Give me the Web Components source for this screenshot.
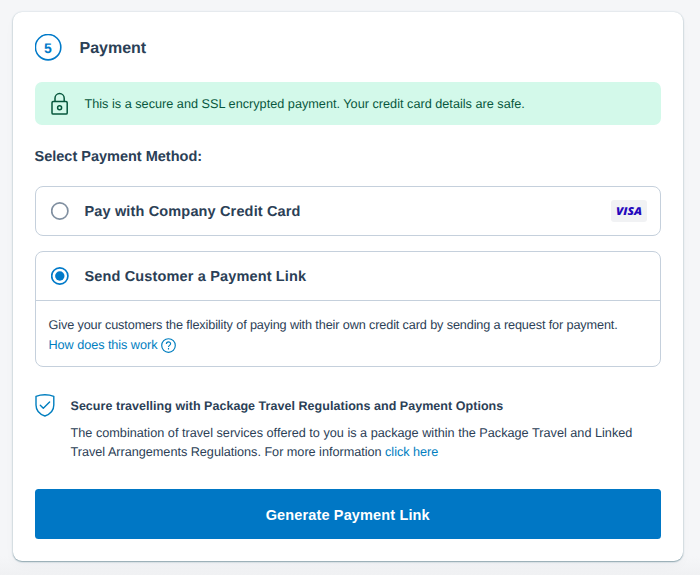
<!DOCTYPE html>
<html lang="en"><head><meta charset="utf-8"><title>Payment</title>
<style>
html,body{margin:0;height:100%}
body{background:linear-gradient(#f5f6f8 0 556px,#f0f1f3 575px);font-family:"Liberation Sans",Arial,sans-serif;color:#2b4056;overflow:hidden;text-rendering:geometricPrecision}
</style></head><body>
<payment-card>
<step-heading number="5">Payment</step-heading>
<secure-banner>This is a secure and SSL encrypted payment. Your credit card details are safe.</secure-banner>
<method-title>Select Payment Method:</method-title>
<payment-option>Pay with Company Credit Card<visa-badge slot="badge"></visa-badge></payment-option>
<payment-option checked>Send Customer a Payment Link<option-details slot="details"></option-details></payment-option>
<travel-notice></travel-notice>
<primary-button>Generate Payment Link</primary-button>
</payment-card>
<script>
const define = (name, markup, setup) => {
  const template = document.createElement('template');
  template.innerHTML = markup;
  customElements.define(name, class extends HTMLElement {
    constructor() {
      super();
      this.attachShadow({mode: 'open'}).append(template.content.cloneNode(true));
    }
    connectedCallback() { if (setup) setup(this, this.shadowRoot); }
  });
};

define('payment-card', `<style>
:host{display:flex;flex-direction:column;box-sizing:border-box;width:670px;height:549px;margin:12px 0 0 13px;padding:22px 22px 0 21.5px;border-radius:9px;background:#fff;box-shadow:0 1px 1.5px #8ca4ad,0 0 2px #c8d5dc,0 5px 12px #20304006}
</style><slot></slot>`);

define('step-heading', `<style>
:host{display:flex;align-items:center;height:27px;gap:18px;font-weight:700;font-size:16px}
.mark{display:grid;grid-template:27px / 27px;place-items:center;color:#007ac9;font-size:14px}
.mark>*{grid-area:1/1}
svg{display:block}
.t{line-height:20px;padding-top:2px}
</style><span class="mark"><svg width="27" height="27" viewBox="0 0 27 27"><circle cx="13.1" cy="13.2" r="12.7" fill="none" stroke="#007ac9" stroke-width="1.6"/></svg><span class="n"></span></span><span class="t"><slot></slot></span>`, (el, root) => {
  root.querySelector('.n').textContent = el.getAttribute('number');
});

define('secure-banner', `<style>
:host{display:flex;align-items:center;box-sizing:border-box;height:43px;margin-top:21.4px;padding-left:16px;gap:16px;border-radius:7px;background:#d3f9ea;color:#07573d;font-size:12.7px}
svg{display:block}.t{white-space:nowrap;padding-top:1px}
</style><svg width="18" height="24" viewBox="0 0 18 24" fill="none" stroke="currentColor" stroke-width="1.5"><rect x="1" y="9.5" width="15.2" height="12.6" rx="1.2"/><path d="M4 9.5V6.2a4.6 4.6 0 0 1 9.2 0v3.3"/><circle cx="8.6" cy="15.8" r="2"/></svg><span class="t"><slot></slot></span>`);

define('method-title', `<style>
:host{display:block;margin-top:22.6px;height:18px;line-height:18px;font-weight:700;font-size:14.5px}
</style><slot></slot>`);

define('payment-option', `<style>
:host{display:flex;flex-direction:column;box-sizing:border-box;height:50px;margin-top:20px;border:1.3px solid #c5d0dc;border-radius:8px}
:host([checked]){height:116px;margin-top:15px}
.row{display:flex;align-items:center;height:48px;padding:0 13px 0 15px;flex:none}
:host([checked]) .row{border-bottom:1px solid #c5d0dc}
svg{display:block;margin-right:16px}
.dot{display:none}:host([checked]) .dot{display:block}
.ring{stroke:#8190a1}:host([checked]) .ring{stroke:#007ac9}
.label{font-weight:700;font-size:14.5px;letter-spacing:.15px;flex:1;white-space:nowrap;padding-top:2px}
</style><div class="row"><svg width="18" height="18" viewBox="0 0 18 18"><circle class="ring" cx="8.8" cy="9" r="8.1" fill="none" stroke-width="1.7"/><circle class="dot" cx="8.8" cy="9" r="4.7" fill="#007ac9"/></svg><span class="label"><slot></slot></span><slot name="badge"></slot></div><slot name="details"></slot>`);

define('visa-badge', `<style>
:host{display:grid;place-items:center;width:36px;height:22px;background:#f1f2f4;border-radius:3px;color:#2408bd}
span{font:italic 800 11px "Open Sans","Noto Sans",sans-serif;line-height:15px;padding-top:1px;transform:scaleX(1.08)}
</style><span>VISA</span>`);

define('option-details', `<style>
:host{display:block;padding:14px 13px 0;font-size:12.7px;line-height:20px}
p{margin:0;white-space:nowrap;letter-spacing:-.133px}
a{display:flex;align-items:center;gap:4px;color:#007ebf;height:21px;letter-spacing:-.06px}
</style><p>Give your customers the flexibility of paying with their own credit card by sending a request for payment.</p><a><span>How does this work</span><svg width="15" height="15" viewBox="0 0 15 15" fill="none" stroke="currentColor" stroke-width="1.15"><circle cx="7.5" cy="7.5" r="6.8"/><path d="M5.4 6c0-2.9 4.2-2.8 4.2-.2 0 1.6-2.1 1.5-2.1 3.2M7.5 10.1v1.3"/></svg></a>`);

define('travel-notice', `<style>
:host{display:flex;gap:16px;margin-top:27px;height:95px;font-size:12.7px;line-height:19px}
svg{display:block;flex:none;margin-top:.5px}
h3{font-size:12.5px;line-height:19px;margin:3.5px 0 8px;letter-spacing:.04px;white-space:nowrap}
p{margin:0;white-space:nowrap}.b{letter-spacing:-.03px}a{color:#007ebf}
</style><svg width="20" height="23" viewBox="0 0 20 23" fill="none" stroke="#007ebf" stroke-width="1.4" stroke-linecap="round" stroke-linejoin="round"><path d="M9.9.8C6.6.8 4 1.2 1 2.3V11c0 6.1 3.7 9.2 8.9 11 5.2-1.8 8.9-4.9 8.9-11V2.3C15.8 1.2 13.2.8 9.9.8Z"/><path d="m5.3 11.3 3 3 6.3-6.3"/></svg><div><h3>Secure travelling with Package Travel Regulations and Payment Options</h3><p>The combination of travel services offered to you is a package within the Package Travel and Linked</p><p class="b">Travel Arrangements Regulations. For more information <a>click here</a></p></div>`);

define('primary-button', `<style>
:host{display:block}
button{display:block;width:100%;height:50.5px;padding:1px 0 0;border:0;border-radius:3.5px;background:#0077c5;color:#fff;font:700 14.5px "Liberation Sans",Arial,sans-serif;letter-spacing:.14px}
</style><button><slot></slot></button>`);
</script></body></html>
